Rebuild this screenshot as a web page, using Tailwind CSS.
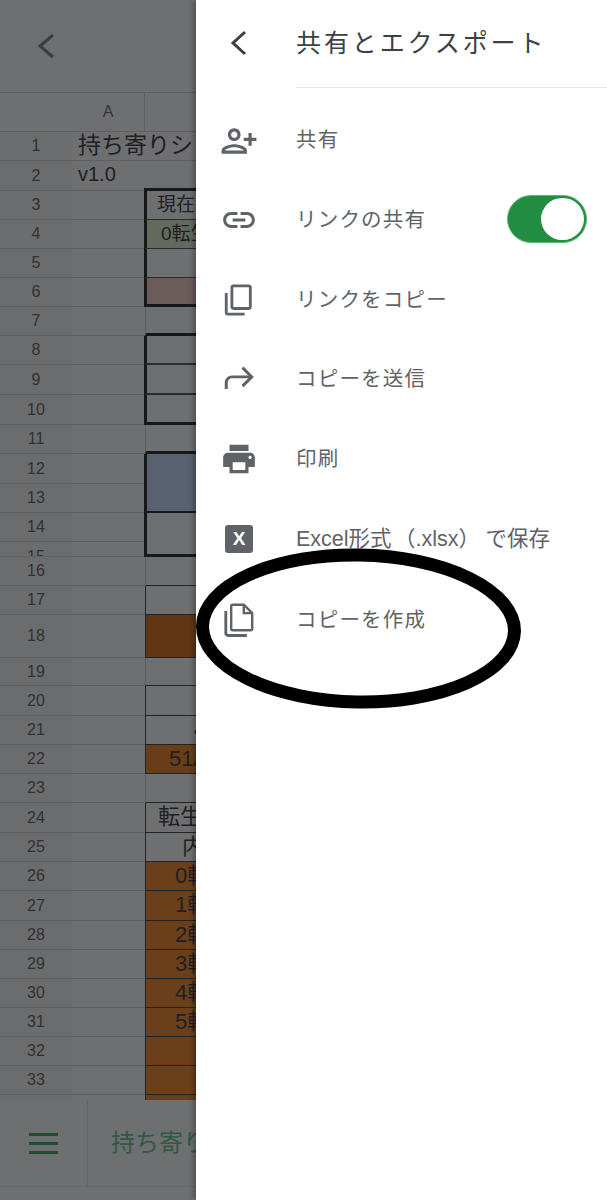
<!DOCTYPE html>
<html lang="ja">
<head>
<meta charset="utf-8">
<script src="https://cdn.jsdelivr.net/npm/@tailwindcss/browser@4"></script>
<title>共有とエクスポート</title>
</head>
<body class="bg-white">
<div class="relative flex h-[1200px] w-[607px] overflow-hidden font-['Liberation_Sans','Noto_Sans_CJK_JP',sans-serif]">
  <!-- dimmed spreadsheet -->
  <div class="flex h-full w-[196px] shrink-0 flex-col overflow-hidden bg-[#6e6f71] text-[#1f2022]">
    <div class="flex h-[93px] shrink-0 items-center border-b border-[#5f6062] pl-[35px]">
      <svg width="22" height="28" viewBox="0 0 22 28" fill="none" stroke="#3c3d3f" stroke-width="3"><path d="M18 3 5 14l13 11"/></svg>
    </div>
    <div class="min-h-0 flex-1 overflow-hidden text-[16px] text-[#303133]">
      <div class="flex h-[39px]"><div class="w-[72px] border-b border-[#5f6062]"></div><div class="flex w-[73px] items-center justify-center border-r border-b border-[#5f6062] text-[#343537]">A</div><div class="flex-1 border-b border-[#5f6062]"></div></div>
      <div class="flex h-[29px]"><div class="flex w-[72px] items-center justify-center border-b border-[#5f6062] bg-[#6b6c6e]">1</div><div class="relative w-[73px] overflow-visible border-b border-[#5f6062] pl-[6px] text-[23px] leading-[27px] whitespace-nowrap text-[#1f2022]">持ち寄りシ</div><div class="flex-1 border-b border-[#5f6062]"></div></div>
      <div class="flex h-[30px]"><div class="flex w-[72px] items-center justify-center border-b border-[#5f6062] bg-[#6b6c6e]">2</div><div class="w-[73px] border-b border-[#5f6062] pl-[6px] text-[20px] leading-[26px] text-[#1f2022]">v1.0</div><div class="-ml-px flex-1 border-b-[3px] border-[#17181a]"></div></div>
      <div class="flex h-[29px]"><div class="flex w-[72px] items-center justify-center border-b border-[#5f6062] bg-[#6b6c6e]">3</div><div class="w-[73px] border-b border-[#5f6062]"></div><div class="-ml-px flex-1 overflow-hidden border-b border-l-[3px] border-[#2a2b2d] border-l-[#17181a] pl-[10px] text-[19px] leading-[27px] whitespace-nowrap text-[#1f2022]">現在</div></div>
      <div class="flex h-[29px]"><div class="flex w-[72px] items-center justify-center border-b border-[#5f6062] bg-[#6b6c6e]">4</div><div class="w-[73px] border-b border-[#5f6062]"></div><div class="-ml-px flex-1 overflow-hidden border-b border-l-[3px] border-[#2a2b2d] border-l-[#17181a] bg-[#62695f] pl-[14px] text-[19px] leading-[27px] whitespace-nowrap text-[#1f2022]">0転生</div></div>
      <div class="flex h-[29px]"><div class="flex w-[72px] items-center justify-center border-b border-[#5f6062] bg-[#6b6c6e]">5</div><div class="w-[73px] border-b border-[#5f6062]"></div><div class="-ml-px flex-1 border-b border-l-[3px] border-[#2a2b2d] border-l-[#17181a]"></div></div>
      <div class="flex h-[29px]"><div class="flex w-[72px] items-center justify-center border-b border-[#5f6062] bg-[#6b6c6e]">6</div><div class="w-[73px] border-b border-[#5f6062]"></div><div class="-ml-px flex-1 border-b-[3px] border-l-[3px] border-[#17181a] bg-[#6c5b5b]"></div></div>
      <div class="flex h-[29px]"><div class="flex w-[72px] items-center justify-center border-b border-[#5f6062] bg-[#6b6c6e]">7</div><div class="w-[73px] border-b border-[#5f6062]"></div><div class="flex-1 border-b-[3px] border-l border-[#17181a] border-l-[#5f6062]"></div></div>
      <div class="flex h-[29px]"><div class="flex w-[72px] items-center justify-center border-b border-[#5f6062] bg-[#6b6c6e]">8</div><div class="w-[73px] border-b border-[#5f6062]"></div><div class="-ml-px flex-1 border-b-2 border-l-[3px] border-[#2a2b2d] border-l-[#17181a]"></div></div>
      <div class="flex h-[30px]"><div class="flex w-[72px] items-center justify-center border-b border-[#5f6062] bg-[#6b6c6e]">9</div><div class="w-[73px] border-b border-[#5f6062]"></div><div class="-ml-px flex-1 border-b-2 border-l-[3px] border-[#2a2b2d] border-l-[#17181a]"></div></div>
      <div class="flex h-[30px]"><div class="flex w-[72px] items-center justify-center border-b border-[#5f6062] bg-[#6b6c6e]">10</div><div class="w-[73px] border-b border-[#5f6062]"></div><div class="-ml-px flex-1 border-b-[3px] border-l-[3px] border-[#17181a]"></div></div>
      <div class="flex h-[29px]"><div class="flex w-[72px] items-center justify-center border-b border-[#5f6062] bg-[#6b6c6e]">11</div><div class="w-[73px] border-b border-[#5f6062]"></div><div class="flex-1 border-b-[3px] border-l border-[#17181a] border-l-[#5f6062]"></div></div>
      <div class="flex h-[30px]"><div class="flex w-[72px] items-center justify-center border-b border-[#5f6062] bg-[#6b6c6e]">12</div><div class="w-[73px] border-b border-[#5f6062]"></div><div class="-ml-px flex-1 border-l-[3px] border-[#17181a] bg-[#596070]"></div></div>
      <div class="flex h-[29px]"><div class="flex w-[72px] items-center justify-center border-b border-[#5f6062] bg-[#6b6c6e]">13</div><div class="w-[73px] border-b border-[#5f6062]"></div><div class="-ml-px flex-1 border-b-[2px] border-l-[3px] border-[#17181a] bg-[#596070]"></div></div>
      <div class="flex h-[29px]"><div class="flex w-[72px] items-center justify-center border-b border-[#5f6062] bg-[#6b6c6e]">14</div><div class="w-[73px] border-b border-[#5f6062]"></div><div class="-ml-px flex-1 border-l-[3px] border-[#17181a]"></div></div>
      <div class="flex h-[15px]"><div class="flex w-[72px] items-start justify-center overflow-hidden border-b border-[#5f6062] bg-[#6b6c6e] pt-[6px] leading-[18px]">15</div><div class="w-[73px] border-b border-[#5f6062]"></div><div class="-ml-px flex-1 border-b-[3px] border-l-[3px] border-[#17181a]"></div></div>
      <div class="flex h-[29px]"><div class="flex w-[72px] items-center justify-center border-b border-[#5f6062] bg-[#6b6c6e]">16</div><div class="w-[73px] border-b border-[#5f6062]"></div><div class="flex-1 border-b border-l border-[#222325] border-l-[#5f6062]"></div></div>
      <div class="flex h-[29px]"><div class="flex w-[72px] items-center justify-center border-b border-[#5f6062] bg-[#6b6c6e]">17</div><div class="w-[73px] border-b border-[#5f6062]"></div><div class="flex-1 border-b border-l border-[#222325]"></div></div>
      <div class="flex h-[43px]"><div class="flex w-[72px] items-center justify-center border-b border-[#5f6062] bg-[#6b6c6e]">18</div><div class="w-[73px] border-b border-[#5f6062]"></div><div class="flex-1 border-b border-l border-[#222325] bg-[#603614]"></div></div>
      <div class="flex h-[28px]"><div class="flex w-[72px] items-center justify-center border-b border-[#5f6062] bg-[#6b6c6e]">19</div><div class="w-[73px] border-b border-[#5f6062]"></div><div class="flex-1 border-b border-l border-[#222325] border-l-[#5f6062]"></div></div>
      <div class="flex h-[30px]"><div class="flex w-[72px] items-center justify-center border-b border-[#5f6062] bg-[#6b6c6e]">20</div><div class="w-[73px] border-b border-[#5f6062]"></div><div class="flex-1 border-b border-l border-[#222325]"></div></div>
      <div class="flex h-[29px]"><div class="flex w-[72px] items-center justify-center border-b border-[#5f6062] bg-[#6b6c6e]">21</div><div class="w-[73px] border-b border-[#5f6062]"></div><div class="flex-1 overflow-hidden border-b border-l border-[#222325] pl-[48px] text-[22px] leading-[27px] text-[#1f2022]">4</div></div>
      <div class="flex h-[29px]"><div class="flex w-[72px] items-center justify-center border-b border-[#5f6062] bg-[#6b6c6e]">22</div><div class="w-[73px] border-b border-[#5f6062]"></div><div class="flex-1 overflow-hidden border-b border-l border-[#222325] bg-[#683d18] pl-[23px] text-[22px] leading-[27px] whitespace-nowrap text-[#1f2022]">51/</div></div>
      <div class="flex h-[29px]"><div class="flex w-[72px] items-center justify-center border-b border-[#5f6062] bg-[#6b6c6e]">23</div><div class="w-[73px] border-b border-[#5f6062]"></div><div class="flex-1 border-b border-l border-[#222325] border-l-[#5f6062]"></div></div>
      <div class="flex h-[30px]"><div class="flex w-[72px] items-center justify-center border-b border-[#5f6062] bg-[#6b6c6e]">24</div><div class="w-[73px] border-b border-[#5f6062]"></div><div class="flex-1 overflow-hidden border-b border-l border-[#222325] pl-[12px] text-[22px] leading-[27px] whitespace-nowrap text-[#1f2022]">転生</div></div>
      <div class="flex h-[29px]"><div class="flex w-[72px] items-center justify-center border-b border-[#5f6062] bg-[#6b6c6e]">25</div><div class="w-[73px] border-b border-[#5f6062]"></div><div class="flex-1 overflow-hidden border-b border-l border-[#222325] pl-[36px] text-[22px] leading-[27px] whitespace-nowrap text-[#1f2022]">内</div></div>
      <div class="flex h-[29px]"><div class="flex w-[72px] items-center justify-center border-b border-[#5f6062] bg-[#6b6c6e]">26</div><div class="w-[73px] border-b border-[#5f6062]"></div><div class="flex-1 overflow-hidden border-b border-l border-[#222325] bg-[#6b3f19] pl-[29px] text-[22px] leading-[27px] whitespace-nowrap text-[#1f2022]">0転</div></div>
      <div class="flex h-[30px]"><div class="flex w-[72px] items-center justify-center border-b border-[#5f6062] bg-[#6b6c6e]">27</div><div class="w-[73px] border-b border-[#5f6062]"></div><div class="flex-1 overflow-hidden border-b border-l border-[#222325] bg-[#6b3f19] pl-[29px] text-[22px] leading-[27px] whitespace-nowrap text-[#1f2022]">1転</div></div>
      <div class="flex h-[29px]"><div class="flex w-[72px] items-center justify-center border-b border-[#5f6062] bg-[#6b6c6e]">28</div><div class="w-[73px] border-b border-[#5f6062]"></div><div class="flex-1 overflow-hidden border-b border-l border-[#222325] bg-[#6b3f19] pl-[29px] text-[22px] leading-[27px] whitespace-nowrap text-[#1f2022]">2転</div></div>
      <div class="flex h-[29px]"><div class="flex w-[72px] items-center justify-center border-b border-[#5f6062] bg-[#6b6c6e]">29</div><div class="w-[73px] border-b border-[#5f6062]"></div><div class="flex-1 overflow-hidden border-b border-l border-[#222325] bg-[#6b3f19] pl-[29px] text-[22px] leading-[27px] whitespace-nowrap text-[#1f2022]">3転</div></div>
      <div class="flex h-[29px]"><div class="flex w-[72px] items-center justify-center border-b border-[#5f6062] bg-[#6b6c6e]">30</div><div class="w-[73px] border-b border-[#5f6062]"></div><div class="flex-1 overflow-hidden border-b border-l border-[#222325] bg-[#6b3f19] pl-[29px] text-[22px] leading-[27px] whitespace-nowrap text-[#1f2022]">4転</div></div>
      <div class="flex h-[29px]"><div class="flex w-[72px] items-center justify-center border-b border-[#5f6062] bg-[#6b6c6e]">31</div><div class="w-[73px] border-b border-[#5f6062]"></div><div class="flex-1 overflow-hidden border-b border-l border-[#222325] bg-[#6b3f19] pl-[29px] text-[22px] leading-[27px] whitespace-nowrap text-[#1f2022]">5転</div></div>
      <div class="flex h-[29px]"><div class="flex w-[72px] items-center justify-center border-b border-[#5f6062] bg-[#6b6c6e]">32</div><div class="w-[73px] border-b border-[#5f6062]"></div><div class="flex-1 border-b border-l border-[#222325] bg-[#6b3f19]"></div></div>
      <div class="flex h-[29px]"><div class="flex w-[72px] items-center justify-center border-b border-[#5f6062] bg-[#6b6c6e]">33</div><div class="w-[73px] border-b border-[#5f6062]"></div><div class="flex-1 border-b border-l border-[#222325] bg-[#6b3f19]"></div></div>
      <div class="flex h-[29px]"><div class="w-[72px] bg-[#6b6c6e]"></div><div class="w-[73px]"></div><div class="flex-1 border-l border-[#222325] bg-[#6b3f19]"></div></div>
    </div>
    <div class="flex h-[100px] shrink-0 flex-col bg-[#6e6f71]">
      <div class="flex h-[87px] items-stretch border-b border-[#656668]">
        <div class="flex w-[88px] items-center justify-center border-r border-[#656668] pt-[1px]">
          <div class="flex w-[29px] flex-col gap-[6px]">
            <div class="h-[3px] bg-[#234d31]"></div><div class="h-[3px] bg-[#234d31]"></div><div class="h-[3px] bg-[#234d31]"></div>
          </div>
        </div>
        <div class="flex flex-1 items-center overflow-hidden pl-[23px] text-[24px] whitespace-nowrap text-[#315843]">持ち寄りシート</div>
      </div>
    </div>
  </div>

  <!-- drawer -->
  <div class="flex h-full flex-1 flex-col bg-white shadow-[-3px_0_4px_rgba(0,0,0,0.25)]">
    <div class="flex h-[88px] shrink-0 items-center">
      <div class="flex w-[86px] shrink-0 justify-center pb-[3px]">
        <svg width="22" height="28" viewBox="0 0 22 28" fill="none" stroke="#3c4043" stroke-width="3"><path d="M17 3 5 14l12 11"/></svg>
      </div>
      <div class="ml-[14px] flex h-full flex-1 items-center border-b border-[#e6e6e6] text-[25px] tracking-[2.9px] whitespace-nowrap text-[#3c4043]">共有とエクスポート</div>
    </div>
    <div class="flex flex-col pt-[13px] text-[#5f6368]">
      <div class="flex h-[79.6px] items-center">
        <div class="flex w-[86px] shrink-0 justify-center"><svg width="38" height="38" viewBox="0 0 24 24" fill="#5f6368" class="-scale-x-100"><path d="M15 12c2.21 0 4-1.79 4-4s-1.79-4-4-4-4 1.79-4 4 1.79 4 4 4zm0-6c1.1 0 2 .9 2 2s-.9 2-2 2-2-.9-2-2 .9-2 2-2zm0 8c-2.67 0-8 1.34-8 4v2h16v-2c0-2.66-5.33-4-8-4zm-6 4c.22-.72 3.31-2 6-2 2.7 0 5.8 1.29 6 2H9zm-3-3v-3h3v-2H6V7H4v3H1v2h3v3h2z"/></svg></div>
        <div class="ml-[14px] text-[20.500px] tracking-[1.2px]">共有</div>
      </div>
      <div class="flex h-[79.6px] items-center">
        <div class="flex w-[86px] shrink-0 justify-center"><svg width="38" height="38" viewBox="0 0 24 24" fill="#5f6368"><path d="M3.9 12c0-1.71 1.39-3.1 3.1-3.1h4V7H7c-2.76 0-5 2.24-5 5s2.24 5 5 5h4v-1.9H7c-1.71 0-3.1-1.39-3.1-3.1zM8 13h8v-2H8v2zm9-6h-4v1.9h4c1.71 0 3.1 1.39 3.1 3.1s-1.39 3.1-3.1 3.1h-4V17h4c2.76 0 5-2.24 5-5s-2.24-5-5-5z"/></svg></div>
        <div class="ml-[14px] flex-1 text-[20.500px] tracking-[1.2px]">リンクの共有</div>
        <div class="mr-[20px] mb-[2px] flex h-[48px] w-[80px] items-center justify-end rounded-full border border-[#5db877] bg-[#218c42] pr-[2px]"><div class="h-[42px] w-[43px] rounded-full bg-white"></div></div>
      </div>
      <div class="flex h-[79.6px] items-center">
        <div class="flex w-[86px] shrink-0 justify-center"><svg width="34" height="34" viewBox="0 0 24 24" fill="#5f6368" class="-scale-y-100"><path d="M16 1H4c-1.1 0-2 .9-2 2v14h2V3h12V1zm3 4H8c-1.1 0-2 .9-2 2v14c0 1.1.9 2 2 2h11c1.1 0 2-.9 2-2V7c0-1.1-.9-2-2-2zm0 16H8V7h11v14z"/></svg></div>
        <div class="ml-[14px] text-[20.500px] tracking-[1.2px]">リンクをコピー</div>
      </div>
      <div class="flex h-[79.6px] items-center">
        <div class="flex w-[86px] shrink-0 justify-center"><svg width="34" height="34" viewBox="0 0 24 24" fill="none" stroke="#5f6368" stroke-width="2.1" class="-translate-y-px"><path d="M3 19v-4.500a4 4 0 0 1 4-4h14"/><path d="m14.500 4 6.500 6.500-6.500 6.500"/></svg></div>
        <div class="ml-[14px] text-[20.500px] tracking-[1.2px]">コピーを送信</div>
      </div>
      <div class="flex h-[79.6px] items-center">
        <div class="flex w-[86px] shrink-0 justify-center"><svg width="38" height="38" viewBox="0 0 24 24" fill="#5f6368"><path d="M19 8H5c-1.66 0-3 1.34-3 3v6h4v4h12v-4h4v-6c0-1.66-1.34-3-3-3zm-3 11H8v-5h8v5zm3-7c-.55 0-1-.45-1-1s.45-1 1-1 1 .45 1 1-.45 1-1 1zm-1-9H6v4h12V3z"/></svg></div>
        <div class="ml-[14px] text-[20.500px] tracking-[1.2px]">印刷</div>
      </div>
      <div class="flex h-[79.6px] items-center">
        <div class="flex w-[86px] shrink-0 justify-center"><div class="flex h-[28px] w-[28px] items-center justify-center rounded-[3px] bg-[#5f6368] text-[19px] font-bold text-white">X</div></div>
        <div class="ml-[14px] text-[21.500px] whitespace-nowrap">Excel形式<span class="inline-block w-[24px] text-right">（</span><span class="inline-block">.xlsx</span><span class="inline-block w-[27px] text-left">）</span><span class="inline-block">で保存</span></div>
      </div>
      <div class="flex h-[83px] items-center">
        <div class="flex w-[86px] shrink-0 justify-center"><svg width="36" height="36" viewBox="0 0 24 24" fill="none" stroke="#5f6368" stroke-width="1.6"><path d="M7.800 1.800h7.400l5.600 5.600v10.400a1 1 0 0 1-1 1H7.800a1 1 0 0 1-1-1V2.800a1 1 0 0 1 1-1z"/><path d="M15.200 1.800v5.600h5.600"/><path d="M3.200 6v14.800a1.500 1.500 0 0 0 1.500 1.500h12.500" stroke-width="1.900"/></svg></div>
        <div class="ml-[14px] text-[20.500px] tracking-[1.2px]">コピーを作成</div>
      </div>
    </div>
  </div>

  <!-- hand-drawn annotation over the menu -->
  <svg class="pointer-events-none absolute top-[545px] left-[190px]" width="340" height="170" viewBox="0 0 340 170" fill="none">
    <ellipse cx="168.500" cy="83.500" rx="156" ry="73.500" stroke="#000" stroke-width="13" transform="rotate(1 168.500 83.500)"/>
  </svg>
</div>
</body>
</html>
